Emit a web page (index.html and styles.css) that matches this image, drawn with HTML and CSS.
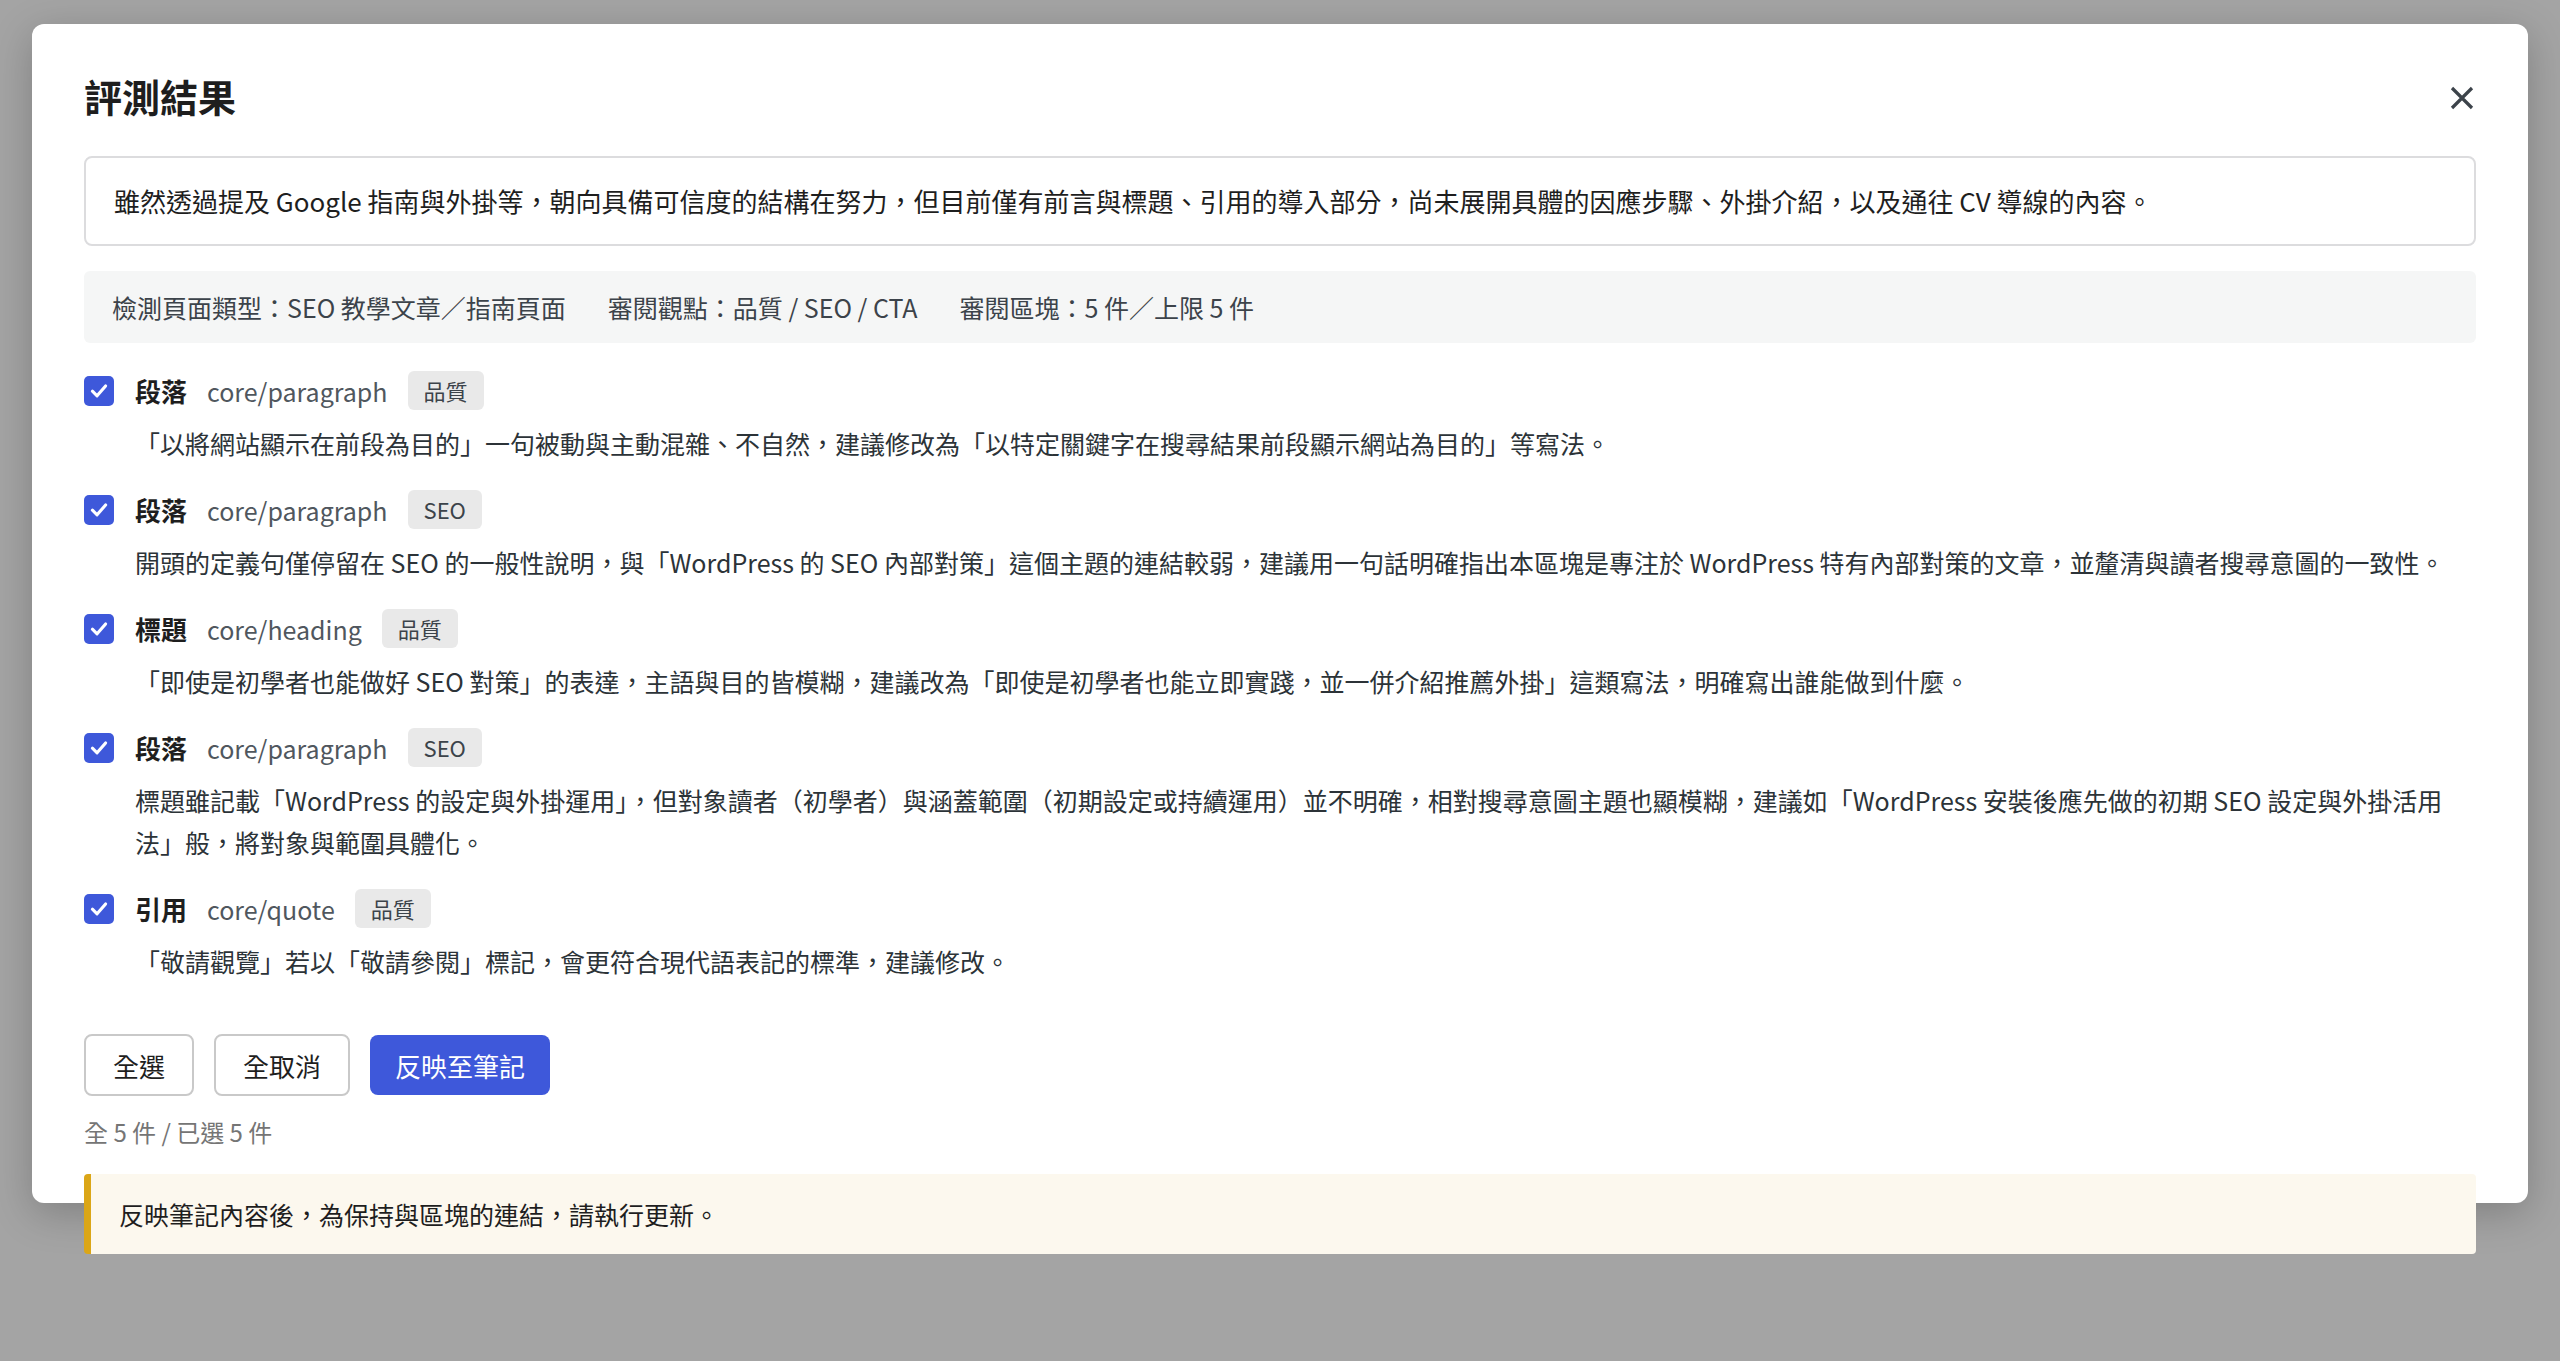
FILE: index.html
```html
<!DOCTYPE html>
<html lang="zh-Hant">
<head>
    <meta charset="UTF-8">
    <meta name="viewport" content="width=device-width, initial-scale=1.0">
    <title>評測結果</title>
    <link rel="stylesheet" href="styles.css">
</head>
<body>

    <div class="modal">
        <div class="modal-header">
            <h2 class="modal-title">評測結果</h2>
            <button class="close-btn" aria-label="關閉">
                <svg width="24" height="24" viewBox="0 0 24 24"><path d="M2 2 L22 22 M22 2 L2 22" stroke="#3c434a" stroke-width="3.2" fill="none"/></svg>
            </button>
        </div>

        <div class="summary">雖然透過提及 Google 指南與外掛等，朝向具備可信度的結構在努力，但目前僅有前言與標題、引用的導入部分，尚未展開具體的因應步驟、外掛介紹，以及通往 CV 導線的內容。</div>

        <div class="meta">
            <span>檢測頁面類型：SEO 教學文章／指南頁面</span>
            <span>審閱觀點：品質 / SEO / CTA</span>
            <span>審閱區塊：5 件／上限 5 件</span>
        </div>

        <ul class="items">
            <li class="item">
                <div class="item-head">
                    <span class="check"><svg width="24" height="24" viewBox="0 0 20 20"><path d="M4.5 10.2 L8.4 14 L15.5 5.8" stroke="#fff" stroke-width="2.6" fill="none" stroke-linecap="round" stroke-linejoin="round"/></svg></span>
                    <strong class="item-name">段落</strong>
                    <span class="item-type">core/paragraph</span>
                    <span class="badge">品質</span>
                </div>
                <p class="item-desc">「以將網站顯示在前段為目的」一句被動與主動混雜、不自然，建議修改為「以特定關鍵字在搜尋結果前段顯示網站為目的」等寫法。</p>
            </li>
            <li class="item">
                <div class="item-head">
                    <span class="check"><svg width="24" height="24" viewBox="0 0 20 20"><path d="M4.5 10.2 L8.4 14 L15.5 5.8" stroke="#fff" stroke-width="2.6" fill="none" stroke-linecap="round" stroke-linejoin="round"/></svg></span>
                    <strong class="item-name">段落</strong>
                    <span class="item-type">core/paragraph</span>
                    <span class="badge">SEO</span>
                </div>
                <p class="item-desc">開頭的定義句僅停留在 SEO 的一般性說明，與「WordPress 的 SEO 內部對策」這個主題的連結較弱，建議用一句話明確指出本區塊是專注於 WordPress 特有內部對策的文章，並釐清與讀者搜尋意圖的一致性。</p>
            </li>
            <li class="item">
                <div class="item-head">
                    <span class="check"><svg width="24" height="24" viewBox="0 0 20 20"><path d="M4.5 10.2 L8.4 14 L15.5 5.8" stroke="#fff" stroke-width="2.6" fill="none" stroke-linecap="round" stroke-linejoin="round"/></svg></span>
                    <strong class="item-name">標題</strong>
                    <span class="item-type">core/heading</span>
                    <span class="badge">品質</span>
                </div>
                <p class="item-desc">「即使是初學者也能做好 SEO 對策」的表達，主語與目的皆模糊，建議改為「即使是初學者也能立即實踐，並一併介紹推薦外掛」這類寫法，明確寫出誰能做到什麼。</p>
            </li>
            <li class="item">
                <div class="item-head">
                    <span class="check"><svg width="24" height="24" viewBox="0 0 20 20"><path d="M4.5 10.2 L8.4 14 L15.5 5.8" stroke="#fff" stroke-width="2.6" fill="none" stroke-linecap="round" stroke-linejoin="round"/></svg></span>
                    <strong class="item-name">段落</strong>
                    <span class="item-type">core/paragraph</span>
                    <span class="badge">SEO</span>
                </div>
                <p class="item-desc">標題雖記載「WordPress 的設定與外掛運用」，但對象讀者（初學者）與涵蓋範圍（初期設定或持續運用）並不明確，相對搜尋意圖主題也顯模糊，建議如「WordPress 安裝後應先做的初期 SEO 設定與外掛活用法」般，將對象與範圍具體化。</p>
            </li>
            <li class="item">
                <div class="item-head">
                    <span class="check"><svg width="24" height="24" viewBox="0 0 20 20"><path d="M4.5 10.2 L8.4 14 L15.5 5.8" stroke="#fff" stroke-width="2.6" fill="none" stroke-linecap="round" stroke-linejoin="round"/></svg></span>
                    <strong class="item-name">引用</strong>
                    <span class="item-type">core/quote</span>
                    <span class="badge">品質</span>
                </div>
                <p class="item-desc">「敬請觀覽」若以「敬請參閱」標記，會更符合現代語表記的標準，建議修改。</p>
            </li>
        </ul>

        <div class="actions">
            <button class="btn">全選</button>
            <button class="btn">全取消</button>
            <button class="btn btn-primary">反映至筆記</button>
        </div>
        <p class="count">全 5 件 / 已選 5 件</p>

        <div class="notice">反映筆記內容後，為保持與區塊的連結，請執行更新。</div>
    </div>

</body>
</html>
```

FILE: styles.css
```css
/* Base */
body {
    margin: 0;
    height: 1361px;
    overflow: hidden;
    background-color: #a4a4a4;
    font-family: "Noto Sans CJK TC", "Noto Sans", sans-serif;
    color: #1e1e1e;
}

/* Dialog */
.modal {
    box-sizing: border-box;
    height: 1179px;
    margin: 24px 32px 0;
    padding: 46px 52px 0;
    background-color: #ffffff;
    border-radius: 12px;
    box-shadow: 0 10px 40px rgba(0,0,0,0.22);
}
.modal-header {
    display: flex;
    justify-content: space-between;
    align-items: center;
    height: 52px;
}
.modal-title {
    margin: 0;
    font-size: 38px;
    font-weight: 700;
    line-height: 52px;
}
.close-btn {
    display: flex;
    align-items: center;
    justify-content: center;
    width: 36px;
    height: 36px;
    margin-top: 3px;
    margin-right: -4px;
    padding: 0;
    border: none;
    background: none;
    cursor: pointer;
}

/* Summary + meta */
.summary {
    margin-top: 34px;
    padding: 22px 28px;
    border: 2px solid #dcdcde;
    border-radius: 8px;
    font-size: 26px;
    line-height: 42px;
}
.meta {
    display: flex;
    gap: 42px;
    margin-top: 25px;
    padding: 15px 28px;
    background-color: #f5f6f6;
    border-radius: 6px;
    font-size: 25px;
    line-height: 42px;
    color: #3c434a;
}

/* Block list */
.items {
    list-style: none;
    margin: 28px 0 0;
    padding: 0;
}
.item + .item {
    margin-top: 26px;
}
.item-head {
    display: flex;
    align-items: center;
    height: 39px;
}
.check {
    display: flex;
    align-items: center;
    justify-content: center;
    width: 30px;
    height: 30px;
    margin-right: 21px;
    background-color: #3e58da;
    border-radius: 5px;
}
.item-name {
    font-size: 26px;
    font-weight: 700;
    margin-right: 20px;
}
.item-type {
    font-size: 25px;
    color: #50575e;
    margin-right: 20px;
}
.badge {
    padding: 0 16px;
    font-size: 22px;
    line-height: 39px;
    color: #3c434a;
    background-color: #e9e9e9;
    border-radius: 6px;
}
.item-desc {
    margin: 12px 0 0 51px;
    font-size: 25px;
    line-height: 42px;
    color: #2c3338;
}

/* Buttons */
.actions {
    display: flex;
    gap: 20px;
    margin-top: 52px;
}
.btn {
    height: 62px;
    padding: 0 27px;
    font-family: inherit;
    font-size: 26px;
    color: #1e1e1e;
    background-color: #ffffff;
    border: 2px solid #c9c9c9;
    border-radius: 8px;
    cursor: pointer;
}
.btn-primary {
    height: 60px;
    margin-top: 1px;
    padding: 0 25px;
    color: #ffffff;
    background-color: #3e58da;
    border: none;
}
.count {
    margin: 17px 0 0;
    font-size: 24px;
    line-height: 38px;
    color: #757575;
}

/* Notice */
.notice {
    margin-top: 23px;
    padding: 0 28px;
    height: 80px;
    line-height: 80px;
    font-size: 25px;
    background-color: #fcf8ee;
    border-left: 7px solid #dba617;
    border-radius: 4px;
}
```
